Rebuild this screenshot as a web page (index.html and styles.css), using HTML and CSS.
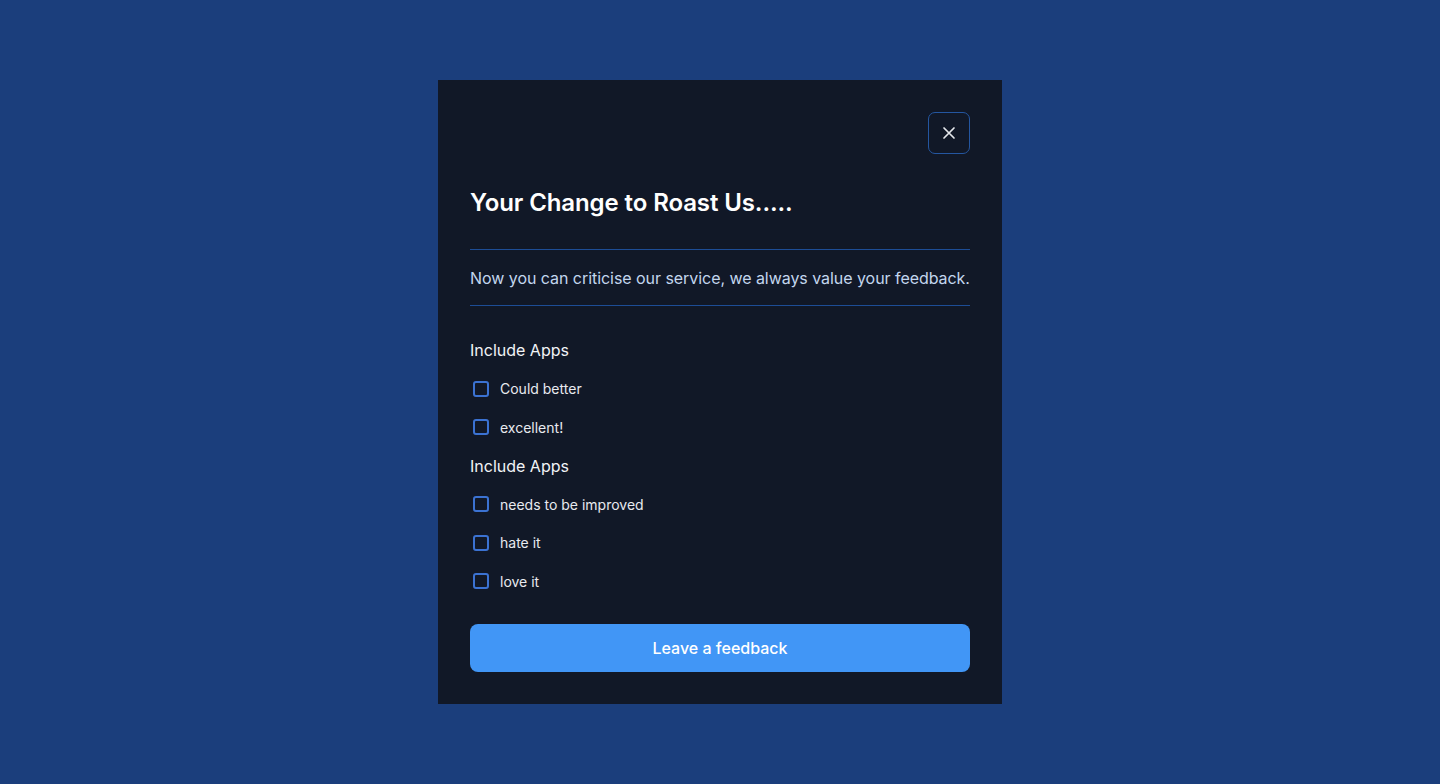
FILE: index.html
```html
<!DOCTYPE html>
<html lang="en">
<head>
<meta charset="utf-8">
<title>Feedback</title>
<link rel="stylesheet" href="styles.css">
</head>
<body>
<div class="stage">
  <div class="modal">
    <div class="modal-top">
      <button class="close" aria-label="Close">
        <svg width="14" height="14" viewBox="0 0 14 14" fill="none"><path d="M2 2L12 12M12 2L2 12" stroke="#e5e7eb" stroke-width="1.7" stroke-linecap="round"/></svg>
      </button>
    </div>
    <h1 class="title">Your Change to Roast Us.....</h1>
    <p class="desc">Now you can criticise our service, we always value your feedback.</p>
    <div class="options">
      <div class="group-title">Include Apps</div>
      <label class="opt"><span class="box"></span>Could better</label>
      <label class="opt"><span class="box"></span>excellent!</label>
      <div class="group-title">Include Apps</div>
      <label class="opt"><span class="box"></span>needs to be improved</label>
      <label class="opt"><span class="box"></span>hate it</label>
      <label class="opt"><span class="box"></span>love it</label>
    </div>
    <button class="submit">Leave a feedback</button>
  </div>
</div>
</body>
</html>
```
FILE: styles.css
```css
* { box-sizing: border-box; }
html, body { margin: 0; padding: 0; }
body {
  background: #1b3e7c;
  font-family: Inter, "Noto Sans", sans-serif;
  height: 784px;
}
.stage {
  display: flex;
  justify-content: center;
  padding-top: 80px;
}
.modal {
  width: 564px;
  background: #111827;
  padding: 32px;
  display: flex;
  flex-direction: column;
}
.modal > * { flex-shrink: 0; }
.modal-top {
  display: flex;
  justify-content: flex-end;
}
.close {
  width: 42px;
  height: 42px;
  border: 1px solid #2456a0;
  border-radius: 7px;
  background: transparent;
  display: flex;
  align-items: center;
  justify-content: center;
  padding: 0;
}
.title {
  margin: 33px 0 0;
  font-size: 24px;
  line-height: 32px;
  font-weight: 600;
  color: #ffffff;
  letter-spacing: -0.1px;
}
.desc {
  margin: 30px 0 0;
  border-top: 1px solid #1d4d96;
  border-bottom: 1px solid #1d4d96;
  padding: 16px 0 15px;
  font-size: 16px;
  line-height: 24px;
  color: #c3d6ee;
  white-space: nowrap;
  letter-spacing: -0.05px;
}
.options {
  margin-top: 32px;
  display: flex;
  flex-direction: column;
  gap: 14.5px;
}
.group-title {
  font-size: 16px;
  line-height: 24px;
  color: #f1f3f6;
  font-weight: 400;
}
.opt {
  display: flex;
  align-items: center;
  height: 24px;
  font-size: 14px;
  color: #e8eaef;
}
.box {
  width: 16px;
  height: 16px;
  margin-left: 3px;
  margin-right: 11px;
  border: 2px solid #3b72d2;
  border-radius: 3px;
}
.submit {
  margin-top: 31px;
  height: 48px;
  border: none;
  border-radius: 8px;
  background: #4196f6;
  color: #ffffff;
  font-family: Inter, "Noto Sans", sans-serif;
  font-size: 16px;
  font-weight: 500;
}
```
